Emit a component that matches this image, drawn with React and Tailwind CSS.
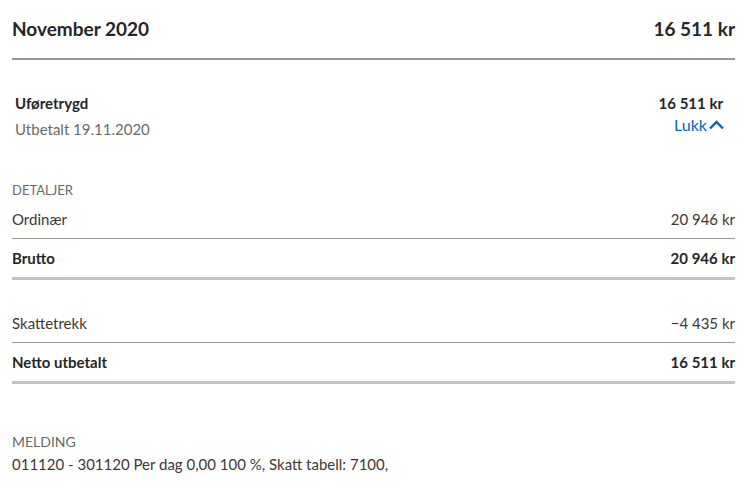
import React from 'react';

const font = { fontFamily: '"Source Sans Pro", Lato, "Liberation Sans", sans-serif' };

function Row({ label, amount, bold, border }) {
  return (
    <div className={`flex items-center justify-between ${border} ${bold ? 'h-[41px] font-bold text-[#262626]' : 'h-[39px] text-[#3e3832]'}`}>
      <span>{label}</span>
      <span>{amount}</span>
    </div>
  );
}

export default function App() {
  return (
    <div className="bg-white w-[749px] h-[485px] pl-3 pr-[14px] text-[15px] text-[#262626]" style={font}>
      <div className="flex items-center justify-between h-[60px] border-b-2 border-[#999] text-[19px] font-bold">
        <span>November 2020</span>
        <span>16 511 kr</span>
      </div>

      <div className="flex justify-between pl-[3px] pr-3 pt-[31px]">
        <div>
          <div className="font-bold leading-[24px]">Uføretrygd</div>
          <div className="text-[#6a6a6a] leading-[28px]">Utbetalt 19.11.2020</div>
        </div>
        <div className="flex flex-col items-end">
          <div className="font-bold leading-[24px]">16 511 kr</div>
          <button className="flex items-center gap-[1px] text-[16px] text-[#0067c5] leading-[20px] -mr-[2px]">
            Lukk
            <svg width="17" height="16" viewBox="0 0 17 16" fill="none">
              <path d="M2 11.5l6.5-6.5 6.5 6.5" stroke="#0067c5" strokeWidth="2.4" />
            </svg>
          </button>
        </div>
      </div>

      <div className="mt-[37px] text-[13px] uppercase text-[#6a6a6a] leading-[20px]">Detaljer</div>
      <Row label="Ordinær" amount="20 946 kr" border="border-b border-[#999]" />
      <Row label="Brutto" amount="20 946 kr" bold border="border-b-[3px] border-[#c6c2bf]" />

      <div className="h-[24px]" />
      <Row label="Skattetrekk" amount="−4 435 kr" border="border-b border-[#999]" />
      <Row label="Netto utbetalt" amount="16 511 kr" bold border="border-b-[3px] border-[#c6c2bf]" />

      <div className="mt-[48px] text-[14px] uppercase text-[#6a6a6a] leading-[20px]">Melding</div>
      <div className="text-[#3e3832] leading-[24px]">011120 - 301120 Per dag 0,00 100 %, Skatt tabell: 7100,</div>
    </div>
  );
}
